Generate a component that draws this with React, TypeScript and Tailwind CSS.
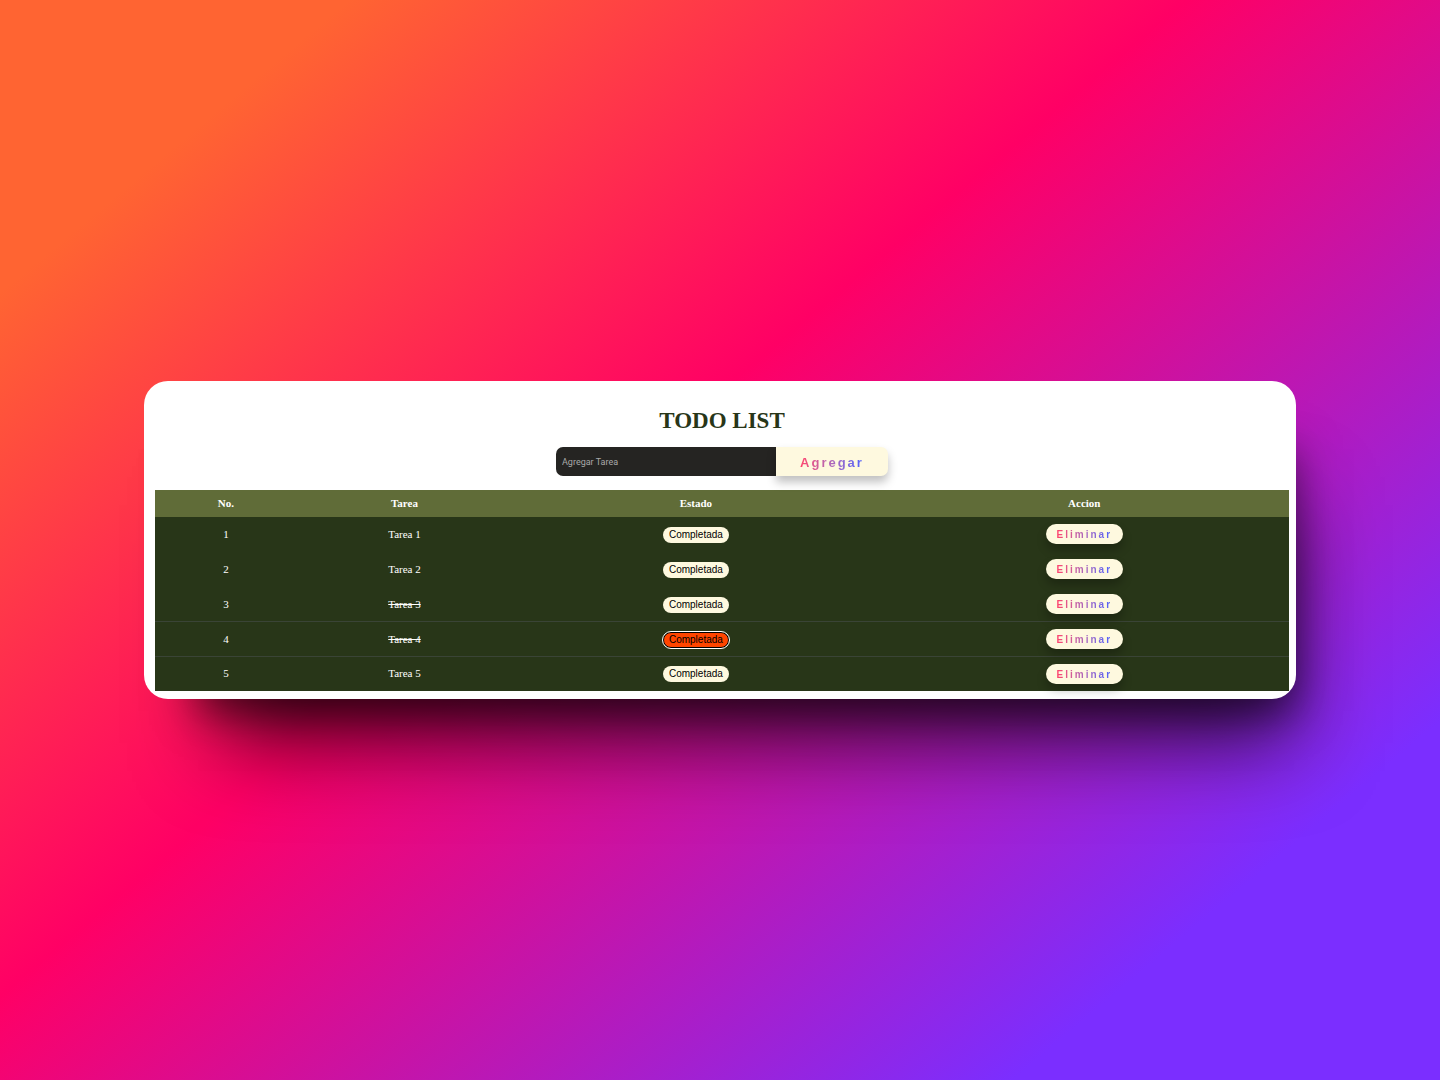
import { useState } from "react";
import type { FormEvent } from "react";

type Task = { id: number; name: string; done: boolean };

const initialTasks: Task[] = [
  { id: 1, name: "Tarea 1", done: false },
  { id: 2, name: "Tarea 2", done: false },
  { id: 3, name: "Tarea 3", done: true },
  { id: 4, name: "Tarea 4", done: true },
  { id: 5, name: "Tarea 5", done: false },
];

const gradientText =
  "bg-gradient-to-r from-[#ff416c] to-[#4a60ff] bg-clip-text text-transparent font-['Liberation_Sans',sans-serif] font-black tracking-[2px]";

export default function App() {
  const [tasks, setTasks] = useState<Task[]>(initialTasks);
  const [name, setName] = useState("");
  const [activeId, setActiveId] = useState(4);

  const addTask = (event: FormEvent) => {
    event.preventDefault();
    if (!name.trim()) return;
    setTasks([...tasks, { id: Math.max(0, ...tasks.map((t) => t.id)) + 1, name: name.trim(), done: false }]);
    setName("");
  };

  const toggleTask = (id: number) => {
    setActiveId(id);
    setTasks(tasks.map((t) => (t.id === id ? { ...t, done: !t.done } : t)));
  };

  return (
    <div className="flex min-h-screen items-center justify-center bg-[linear-gradient(140deg,#ff6432_12.8%,#ff0065_43.52%,#7b2eff_84.34%)] font-['Liberation_Serif',serif]">
      <main className="w-4/5 rounded-[24px] bg-white pt-[27px] pr-[7px] pb-2 pl-[11px] shadow-[26px_40px_40px_-28px_rgba(0,0,0,0.55),36px_84px_84px_-40px_rgba(0,0,0,0.65)]">
        <h1 className="text-center text-[23px] leading-[26px] font-bold text-[#283618]">TODO LIST</h1>

        <form onSubmit={addTask} className="mt-[13px] flex justify-center">
          <input
            type="text"
            aria-label="Agregar Tarea"
            placeholder="Agregar Tarea"
            value={name}
            onChange={(event) => setName(event.target.value)}
            className="h-[29px] w-[220px] rounded-l-[7px] bg-[#252422] px-[6px] font-['Roboto',sans-serif] text-[9px] text-white outline-none placeholder:text-[#a9a9a9]"
          />
          <button
            type="submit"
            className="h-[29px] w-[112px] rounded-r-[7px] bg-[#fef9df] shadow-[0_6px_10px_rgba(0,0,0,0.25)]"
          >
            <span className={`${gradientText} text-[13px]`}>Agregar</span>
          </button>
        </form>

        <table className="mt-[14px] h-[201px] w-full border-separate border-spacing-0 text-center text-[11px] text-white">
          <thead>
            <tr className="h-[27px] bg-[#606c38]">
              <th scope="col" className="w-[12.5%] font-bold">No.</th>
              <th scope="col" className="w-[19%] font-bold">Tarea</th>
              <th scope="col" className="w-[32.4%] font-bold">Estado</th>
              <th scope="col" className="font-bold">Accion</th>
            </tr>
          </thead>
          <tbody className="bg-[#283618]">
            {tasks.map((task) => (
              <tr
                key={task.id}
                className={task.id > 3 ? "shadow-[inset_0_1px_0_#3a4436]" : ""}
              >
                <td>{task.id}</td>
                <td className={task.done ? "line-through" : ""}>{task.name}</td>
                <td>
                  <button
                    type="button"
                    aria-pressed={task.done}
                    onClick={() => toggleTask(task.id)}
                    className={
                      task.id === activeId
                        ? "h-4 rounded-full border border-black bg-[#ff4500] px-[5px] align-middle font-['Liberation_Sans',sans-serif] text-[10px] leading-[14px] text-black outline-[1px] outline-white"
                        : "h-4 rounded-full bg-[#fef9df] px-[6px] align-middle font-['Liberation_Sans',sans-serif] text-[10px] leading-4 text-black"
                    }
                  >
                    Completada
                  </button>
                </td>
                <td>
                  <button
                    type="button"
                    onClick={() => setTasks(tasks.filter((t) => t.id !== task.id))}
                    className="h-5 rounded-full bg-[#fef9df] px-[11px] align-middle leading-5 shadow-[0_6px_10px_rgba(0,0,0,0.25)]"
                  >
                    <span className={`${gradientText} text-[10px]`}>Eliminar</span>
                  </button>
                </td>
              </tr>
            ))}
          </tbody>
        </table>
      </main>
    </div>
  );
}
